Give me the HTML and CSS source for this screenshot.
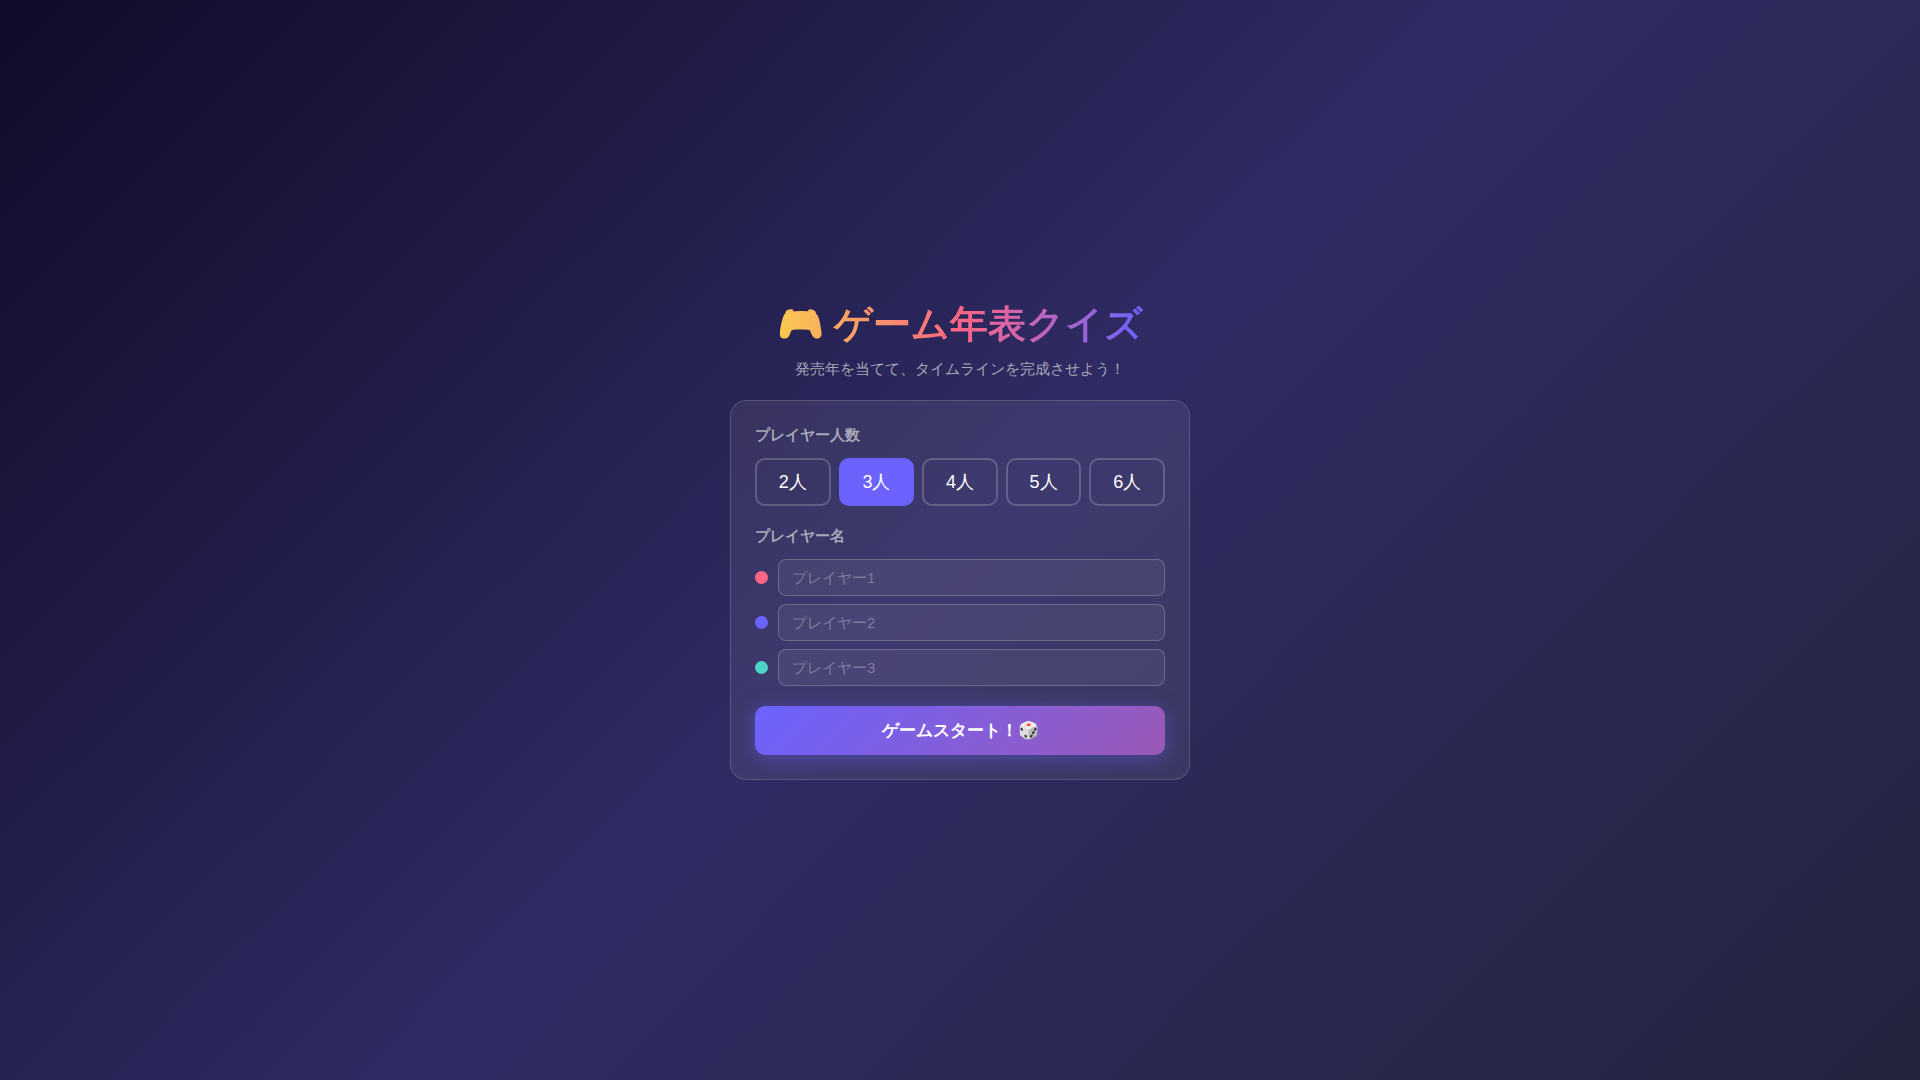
FILE: index.html
```html
<!DOCTYPE html>
<html lang="ja">
<head>
<meta charset="UTF-8">
<meta name="viewport" content="width=device-width, initial-scale=1">
<title>ゲーム年表クイズ</title>
<link rel="stylesheet" href="styles.css">
</head>
<body>
<main class="setup">
  <h1 class="title">🎮 ゲーム年表クイズ</h1>
  <p class="subtitle">発売年を当てて、タイムラインを完成させよう！</p>
  <form class="card">
    <h2 class="label" id="count-label">プレイヤー人数</h2>
    <div class="counts" role="group" aria-labelledby="count-label">
      <button type="button" class="count">2人</button>
      <button type="button" class="count count-active" aria-pressed="true">3人</button>
      <button type="button" class="count">4人</button>
      <button type="button" class="count">5人</button>
      <button type="button" class="count">6人</button>
    </div>
    <h2 class="label">プレイヤー名</h2>
    <div class="players">
      <div class="player"><span class="dot dot-red"></span><input class="name" type="text" placeholder="プレイヤー1" aria-label="プレイヤー1"></div>
      <div class="player"><span class="dot dot-violet"></span><input class="name" type="text" placeholder="プレイヤー2" aria-label="プレイヤー2"></div>
      <div class="player"><span class="dot dot-teal"></span><input class="name" type="text" placeholder="プレイヤー3" aria-label="プレイヤー3"></div>
    </div>
    <button type="button" class="start">ゲームスタート！🎲</button>
  </form>
</main>
</body>
</html>
```
FILE: styles.css
```css
* { box-sizing: border-box; margin: 0; padding: 0; }
body {
  min-height: 100vh;
  display: flex;
  align-items: center;
  justify-content: center;
  background: linear-gradient(135deg, #0f0c29, #302b63, #24243e);
  color: #fff;
  font-family: "Liberation Sans", sans-serif;
}
.setup { width: 100%; max-width: 460px; text-align: center; }
.title {
  width: fit-content;
  margin: 0 auto;
  font-size: 38px;
  line-height: 48px;
  background: linear-gradient(90deg, #f9ca4f, #ff6584, #6c63ff);
  -webkit-background-clip: text;
  background-clip: text;
  color: transparent;
}
.subtitle { margin: 10px 0 20px; font-size: 15px; line-height: 22px; color: #a8a8b8; }
.card {
  padding: 24px;
  text-align: left;
  background: rgba(255, 255, 255, .07);
  border: 1px solid rgba(255, 255, 255, .15);
  border-radius: 16px;
}
.label { margin-bottom: 14px; font-size: 15px; line-height: 19px; color: #a8a8b8; }
.counts { display: flex; gap: 8px; margin-bottom: 20px; }
.count {
  flex: 1;
  height: 48px;
  border: 2px solid rgba(255, 255, 255, .2);
  border-radius: 10px;
  background: transparent;
  color: #fff;
  font: 18px "Liberation Sans", sans-serif;
}
.count-active { background: #6c63ff; border-color: #6c63ff; }
.players { display: grid; gap: 8px; margin-bottom: 20px; }
.player { display: flex; align-items: center; gap: 10px; }
.dot { width: 13px; height: 13px; border-radius: 50%; }
.dot-red { background: #ff6584; }
.dot-violet { background: #6c63ff; }
.dot-teal { background: #4dd4c6; }
.name {
  flex: 1;
  height: 37px;
  padding: 0 13px;
  border: 1px solid rgba(255, 255, 255, .2);
  border-radius: 8px;
  background: rgba(255, 255, 255, .06);
  color: #fff;
  font: 15px "Liberation Sans", sans-serif;
}
.name::placeholder { color: rgba(255, 255, 255, .3); }
.start {
  display: block;
  width: 100%;
  height: 49px;
  border: 0;
  border-radius: 10px;
  background: linear-gradient(135deg, #6c63ff, #9b59b6);
  box-shadow: 0 4px 20px rgba(108, 99, 255, .4);
  color: #fff;
  font: bold 17px "Liberation Sans", sans-serif;
}
```
